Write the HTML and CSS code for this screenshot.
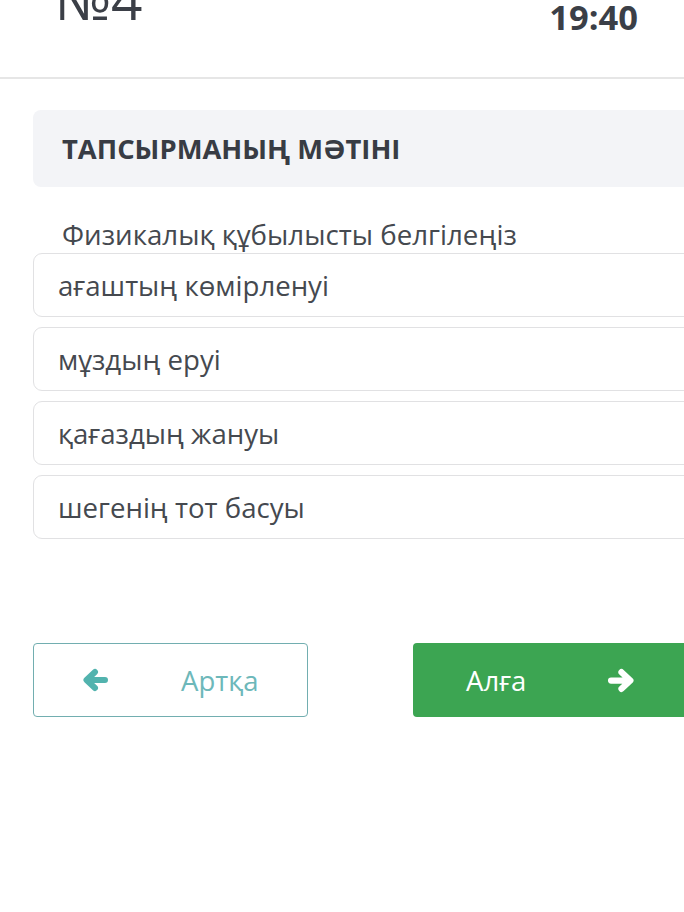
FILE: index.html
```
<html>
<head>
<meta charset="utf-8">
<meta name="viewport" content="width=device-width, initial-scale=1">
<title>Тапсырма №4</title>
<link rel="stylesheet" href="styles.css">
</head>
<body>
<div class="topbar">
  <div class="num">№4</div>
  <div class="timer">19:40</div>
</div>
<div class="main">
  <div class="task-head">ТАПСЫРМАНЫҢ МӘТІНІ</div>
  <p class="question">Физикалық құбылысты белгілеңіз</p>
  <div class="answers">
    <div class="answer">ағаштың көмірленуі</div>
    <div class="answer">мұздың еруі</div>
    <div class="answer">қағаздың жануы</div>
    <div class="answer">шегенің тот басуы</div>
  </div>
  <div class="nav">
    <button class="btn back">
      <svg width="26" height="24" viewBox="0 0 26 24"><path d="M23 12H5M13 4L4.5 12L13 20" fill="none" stroke="#52b3ae" stroke-width="6" stroke-linecap="round" stroke-linejoin="round"/></svg>
      <span>Артқа</span>
    </button>
    <button class="btn next">
      <span>Алға</span>
      <svg width="29" height="25" viewBox="0 0 26 24"><path d="M3 12H21M13 4L21.5 12L13 20" fill="none" stroke="#fff" stroke-width="6" stroke-linecap="round" stroke-linejoin="round"/></svg>
    </button>
  </div>
</div>
</body>
</html>
```
FILE: styles.css
```
body {
  margin: 0;
  font-family: "Open Sans", "DejaVu Sans", sans-serif;
  color: #42464d;
  background: #fff;
  overflow: hidden;
}
.topbar {
  height: 79px;
  border-bottom: 2px solid #e6e6e6;
  display: flex;
  justify-content: space-between;
  padding: 0 46px 0 55px;
  box-sizing: border-box;
}
.num {
  font-size: 55px;
  line-height: 1;
  margin-top: -29px;
  color: #3b3f47;
}
.timer {
  font-size: 34.5px;
  font-weight: bold;
  line-height: 1;
  margin-top: 0;
  color: #3b3f47;
}
.main {
  padding: 31px 0 0 33px;
  width: 680px;
}
.task-head {
  background: #f3f4f7;
  border-radius: 8px;
  height: 77px;
  box-sizing: border-box;
  padding: 0 29px;
  display: flex;
  align-items: center;
  font-size: 27.4px;
  font-weight: bold;
  color: #383c44;
}
.question {
  margin: 0;
  padding: 27px 0 0 29px;
  font-size: 27.7px;
  line-height: 40px;
  height: 39px;
  color: #45494f;
}
.answers {
  display: flex;
  flex-direction: column;
  gap: 10px;
}
.answer {
  height: 64px;
  box-sizing: border-box;
  border: 1px solid #e1e1e3;
  border-radius: 9px;
  padding: 0 24px;
  display: flex;
  align-items: center;
  font-size: 27.6px;
  color: #45494f;
}
.nav {
  margin-top: 104px;
  display: flex;
  gap: 105px;
}
.btn {
  height: 74px;
  width: 275px;
  font-family: "Open Sans", "DejaVu Sans", sans-serif;
  font-size: 27.5px;
  display: flex;
  align-items: center;
  border-radius: 4px;
  box-sizing: border-box;
  cursor: pointer;
}
.back {
  background: #fff;
  border: 1px solid #72aeb0;
  color: #6db8ba;
  padding: 0 0 0 48px;
}
.back span {
  margin-left: 73px;
}
.next {
  background: #3ca552;
  border: none;
  color: #fff;
  padding: 0 0 0 53px;
}
.next svg {
  margin-left: 81px;
}
```
